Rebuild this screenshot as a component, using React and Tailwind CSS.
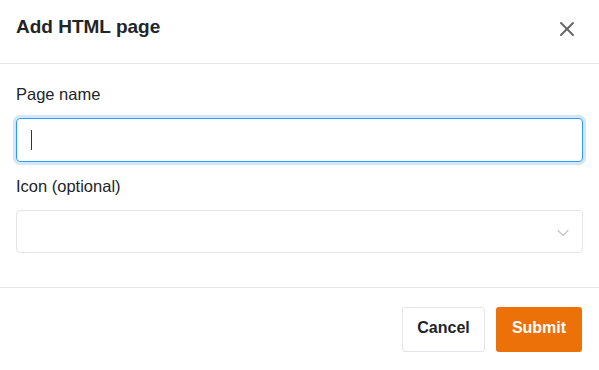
import { X, ChevronDown } from "lucide-react";

export default function App() {
  return (
    <div
      className="w-[599px] h-[370px] bg-white text-[#212529] flex flex-col"
      style={{ fontFamily: '"Liberation Sans", Arial, sans-serif' }}
    >
      {/* header */}
      <div className="h-[64px] flex items-center justify-between pl-4 pr-[20px] border-b border-[#e4e6ea] shrink-0">
        <h2 className="text-[19px] font-bold leading-none -mt-[11px]">Add HTML page</h2>
        <button className="text-[#666] -mt-[6px]">
          <X size={24} strokeWidth={2} />
        </button>
      </div>

      {/* body */}
      <div className="px-4 pt-[18px] pb-[34px] border-b border-[#e4e6ea]">
        <label className="block text-[16.5px] leading-6 mb-3">Page name</label>
        <div className="h-[44px] rounded-[4px] border border-[#2d9cf4] ring-[3px] ring-[#d3e6fb] flex items-center px-[14px]">
          <span className="w-px h-[20px] bg-[#333]" />
        </div>
        <label className="block text-[16.5px] leading-6 mt-3 mb-3">Icon (optional)</label>
        <div className="h-[43px] rounded-[4px] border border-[#e3e5ea] flex items-center justify-end pr-[9px]">
          <ChevronDown size={20} strokeWidth={1.5} className="text-[#c4c4c4] mt-[2px]" />
        </div>
      </div>

      {/* footer */}
      <div className="flex justify-end gap-[11px] pt-[19px] pr-[17px]">
        <button className="h-[45px] w-[83px] pb-[3px] rounded-[3px] border border-[#e3e5ea] bg-white text-[16px] font-bold text-[#212529]">
          Cancel
        </button>
        <button className="h-[45px] w-[86px] pb-[3px] rounded-[3px] bg-[#ed7109] text-[16px] font-bold text-white">
          Submit
        </button>
      </div>
    </div>
  );
}
